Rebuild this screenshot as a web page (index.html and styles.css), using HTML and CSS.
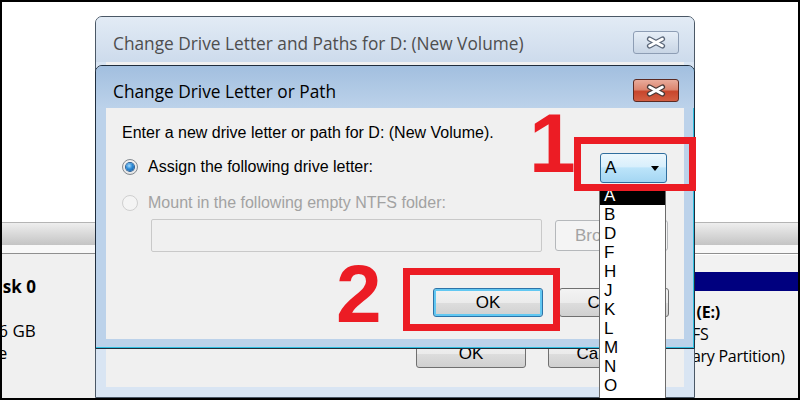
FILE: index.html
```html
<!DOCTYPE html>
<html lang="en">
<head>
<meta charset="utf-8">
<title>Change Drive Letter or Path</title>
<link rel="stylesheet" href="styles.css">
</head>
<body>
<div class="screen">
  <div class="desk">
    <div class="desk-top"></div>
    <div class="desk-header"></div>
    <div class="desk-gap"></div>
    <div class="desk-lower">
      <div class="disk-label">
        <div class="dl-line dl-title"><svg class="disk-ico" viewBox="0 0 22 16"><rect x="3" y="3" width="16" height="10" rx="1" fill="#9aa4ae" stroke="#555"/><rect x="5" y="9" width="4" height="2" fill="#3c3"/></svg>Disk 0</div>
        <div class="dl-line">Basic</div>
        <div class="dl-line">465.76 GB</div>
        <div class="dl-line">Online</div>
      </div>
      <div class="part part-d"><div class="part-bar"></div></div>
      <div class="part part-e">
        <div class="part-bar"></div>
        <div class="part-text">
          <div class="pt-line pt-bold">New Volume (E:)</div>
          <div class="pt-line">465.76 GB NTFS</div>
          <div class="pt-line">Healthy (Primary Partition)</div>
        </div>
      </div>
    </div>
  </div>

  <div class="win win-outer">
    <div class="titlebar">
      <span class="title">Change Drive Letter and Paths for D: (New Volume)</span>
      <div class="close close-inactive">
        <svg width="46" height="23" viewBox="0 0 46 23"><path d="M16.5 8 L29.5 15 M29.5 8 L16.5 15" stroke="#5b6779" stroke-width="5.2" stroke-linecap="round" fill="none"/><path d="M16.5 8 L29.5 15 M29.5 8 L16.5 15" stroke="#fff" stroke-width="2.6" stroke-linecap="round" fill="none"/></svg>
      </div>
    </div>
    <div class="client client-outer">
      <div class="btn-row btn-row-outer">
        <div class="btn">OK</div>
        <div class="btn">Cancel</div>
      </div>
    </div>
  </div>

  <div class="win win-inner">
    <div class="titlebar titlebar-active">
      <span class="title title-active">Change Drive Letter or Path</span>
      <div class="close close-active">
        <svg width="46" height="23" viewBox="0 0 46 23"><path d="M16.5 8 L29.5 15 M29.5 8 L16.5 15" stroke="#4a3a38" stroke-width="5.2" stroke-linecap="round" fill="none"/><path d="M16.5 8 L29.5 15 M29.5 8 L16.5 15" stroke="#fff" stroke-width="2.6" stroke-linecap="round" fill="none"/></svg>
      </div>
    </div>
    <div class="client client-inner">
      <p class="intro">Enter a new drive letter or path for D: (New Volume).</p>
      <div class="opt opt1">
        <span class="radio radio-on"></span>
        <span>Assign the following drive letter:</span>
        <div class="combo"><span class="combo-val">A</span><span class="combo-arrow"></span></div>
      </div>
      <div class="opt opt2">
        <span class="radio radio-off"></span>
        <span>Mount in the following empty NTFS folder:</span>
      </div>
      <div class="path-row">
        <div class="path-field"></div>
        <div class="btn btn-disabled browse">Browse...</div>
      </div>
      <div class="btn-row">
        <div class="btn btn-default">OK</div>
        <div class="btn">Cancel</div>
      </div>
    </div>
  </div>

  <ul class="droplist">
    <li class="sel">A</li><li>B</li><li>D</li><li>F</li><li>H</li><li>J</li><li>K</li><li>L</li><li>M</li><li>N</li><li>O</li><li>P</li><li>Q</li>
  </ul>

  <div class="mark-box mark-box1"></div>
  <div class="mark-box mark-box2"></div>
  <div class="mark-num mark-num1">1</div>
  <div class="mark-num mark-num2">2</div>
</div>
</body>
</html>
```

FILE: styles.css
```css
* { box-sizing: border-box; }
html, body { margin: 0; padding: 0; background: #fff; }
body { width: 800px; height: 400px; overflow: hidden; font-family: "Liberation Sans", Arial, sans-serif; }

.screen { position: relative; width: 800px; height: 400px; border: 2px solid #000; overflow: hidden; background: #fff; }

/* background: disk management view */
.desk { display: flex; flex-direction: column; height: 100%; }
.desk-top { flex: 0 0 220px; background: #fff; }
.desk-header { flex: 0 0 23px; background: linear-gradient(#eeeeee, #c4c4c4); border-top: 1px solid #b4b4b4; }
.desk-gap { flex: 0 0 8px; background: #f8f8f8; }
.desk-lower { flex: 1; display: grid; grid-template-columns: 93px 494px 1fr; border-top: 1px solid #8f8f8f; box-shadow: inset 0 1px 0 #fff; background: #f2f2f2; font-family: "Open Sans", sans-serif; font-size: 17px; color: #000; }
.disk-label { overflow: hidden; padding-top: 22px; background: #f0f0f0; }
.dl-line { line-height: 22px; white-space: nowrap; margin-left: -47px; }
.dl-title { font-weight: 700; display: flex; align-items: center; }
.disk-ico { width: 22px; height: 16px; margin-right: 8px; flex: none; }
.part { padding-top: 18px; overflow: hidden; }
.part-bar { height: 19px; background: #00007f; }
.part-text { padding: 10px 0 0 5px; font-size: 16px; letter-spacing: -0.25px; }
.pt-line { line-height: 22px; white-space: pre; }
.pt-bold { font-weight: 700; }

/* windows */
.win { position: absolute; left: 93px; width: 600px; border: 1px solid #4b5866; border-radius: 7px 7px 0 0; display: flex; flex-direction: column; overflow: hidden; }
.win-outer { top: 14px; height: 382px; background: #d9e5f3; }
.win-inner { top: 63px; height: 284px; background: #bcd2ea; border-color: #1f2d3d; box-shadow: inset -1px -1px 0 #2fbfe0; }

.titlebar { flex: none; height: 45px; display: flex; align-items: flex-start; padding: 14px 15px 0 17px; background: linear-gradient(#e2ebf5, #cddbec); }
.titlebar-active { height: 42px; padding-top: 13px; background: linear-gradient(#a2bfdf, #bcd2ea); }
.title { flex: 1; margin-top: 1px; line-height: 23px; font-family: "Open Sans", sans-serif; font-size: 17.3px; color: #4e4e4e; white-space: nowrap; }
.title-active { color: #000; }

.close { flex: none; width: 46px; height: 23px; border-radius: 3px; border: 1px solid #8d9db4; overflow: hidden; position: relative; }
.close svg { display: block; margin: -1px; }
.close-inactive { background: linear-gradient(#e6eef7, #c8d5e5); }
.close-active { border-color: #5b2a22; background: linear-gradient(#e9ab9b 0%, #dc8670 45%, #c8462c 55%, #d35f43 100%); }

.client { background: #f0f0f0; margin: 0 10px; }
.client-outer { flex: 1; margin-bottom: 10px; display: flex; flex-direction: column; justify-content: flex-end; padding: 0 26px 19px 0; }
.client-inner { flex: 1; margin-bottom: 9px; padding: 16px 15px 0 16px; font-size: 16px; color: #000; }

.intro { margin: 0; line-height: 18px; white-space: nowrap; }
.opt { display: flex; align-items: center; height: 20px; white-space: nowrap; }
.opt1 { margin-top: 15px; }
.opt2 { margin-top: 16px; color: #a2a2a2; }
.radio { flex: none; width: 16px; height: 16px; border-radius: 50%; margin-right: 10px; display: flex; align-items: center; justify-content: center; }
.radio-on { border: 1px solid #858b91; background: radial-gradient(circle at 50% 40%, #ffffff 0%, #dcdcdc 100%); }
.radio-on::after { content: ""; width: 8px; height: 8px; border-radius: 50%; background: radial-gradient(circle at 40% 35%, #a6dcff 0%, #2b8ad6 45%, #0f4f95 100%); box-shadow: 0 0 0 1px #2a5e93; }
.radio-off { border: 1px solid #cfcfcf; background: #f4f4f4; }

.combo { margin-left: auto; margin-right: 2px; margin-top: 2px; width: 67px; height: 30px; border: 1px solid #2f6e9e; border-radius: 3px; display: flex; align-items: center; padding: 0 7px 0 4px; background: linear-gradient(#ecf7fd 0%, #d8effc 45%, #bce4fa 50%, #a4d6f3 100%); font-size: 17px; }
.combo-val { flex: 1; }
.combo-arrow { width: 0; height: 0; border-left: 4px solid transparent; border-right: 4px solid transparent; border-top: 5px solid #000; }

.path-row { display: flex; align-items: center; gap: 13px; margin-top: 6px; padding-left: 29px; }
.path-field { width: 391px; height: 33px; border: 1px solid #c9c9c9; border-radius: 2px; background: #f0f0f0; }

.btn { width: 110px; height: 29px; border: 1px solid #707070; border-radius: 3px; display: flex; align-items: center; justify-content: center; font-size: 17px; color: #000; background: linear-gradient(#f3f3f3 0%, #ebebeb 50%, #dddddd 51%, #d0d0d0 100%); }
.btn-default { border-color: #2d73a8; box-shadow: inset 0 0 0 2px #62c8f2; }
.btn-disabled { color: #a3a3a3; border-color: #b5b8bb; background: #f4f4f4; }
.browse { width: 113px; height: 31px; justify-content: flex-start; padding-left: 19px; }

.btn-row { display: flex; justify-content: flex-end; gap: 16px; margin-top: 36px; }
.btn-row-outer { gap: 22px; margin-top: 0; }

/* open drop-down list */
.droplist { position: absolute; left: 597px; top: 183px; width: 67px; height: 260px; margin: 0; padding: 0; list-style: none; background: #fff; border: 1px solid #6b6b6b; font-size: 17px; }
.droplist li { height: 19px; line-height: 19px; padding-left: 4px; }
.droplist li.sel { background: #000; color: #fff; }

/* red annotations */
.mark-box { position: absolute; border: 7px solid #ec1c24; }
.mark-box1 { left: 572px; top: 135px; width: 122px; height: 54px; }
.mark-box2 { left: 401px; top: 266px; width: 157px; height: 63px; }
.mark-num { position: absolute; font-family: "Liberation Sans", Arial, sans-serif; font-weight: 700; color: #ec1c24; line-height: 1; }
.mark-num1 { left: 527px; top: 99px; font-size: 84px; }
.mark-num2 { left: 334px; top: 251px; font-size: 82px; }
```
